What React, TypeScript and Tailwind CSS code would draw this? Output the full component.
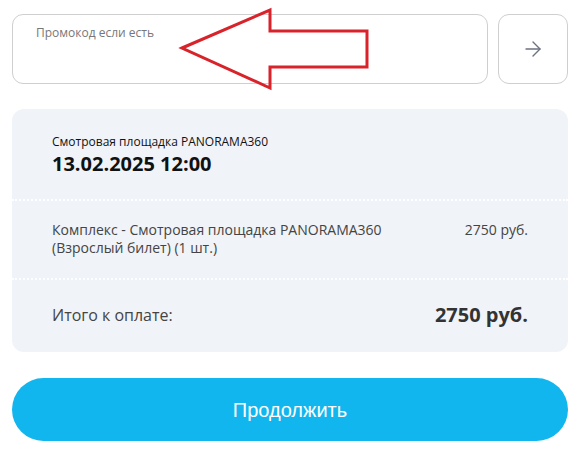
import React from "react";
import { ArrowRight } from "lucide-react";

export default function App() {
  return (
    <div className="relative w-[580px] h-[455px] bg-white" style={{ fontFamily: '"Open Sans", "Noto Sans", sans-serif' }}>
      <div className="flex flex-col px-[12px] pt-[14px]">
        <div className="flex gap-[10px]">
          <div className="flex-1 h-[70px] rounded-[11px] border border-[#cfcfcf] pl-[23px] pt-[10px]">
            <div className="text-[12px] leading-[16px] text-[#777]">Промокод если есть</div>
          </div>
          <div className="w-[70px] h-[70px] rounded-[11px] border border-[#cfcfcf] flex items-center justify-center">
            <ArrowRight size={24} strokeWidth={1.4} className="text-[#6b7280]" />
          </div>
        </div>

        <div className="mt-[25px] rounded-[12px] bg-[#f0f3f7] overflow-hidden">
          <div className="px-[40px] pt-[25px] pb-[21px] border-b-2 border-dotted border-white">
            <div className="text-[12px] leading-[16px] text-[#111]">Смотровая площадка PANORAMA360</div>
            <div className="text-[20px] leading-[28px] font-bold text-[#111]">13.02.2025 12:00</div>
          </div>
          <div className="px-[40px] pt-[20px] pb-[21px] border-b-2 border-dotted border-white flex justify-between">
            <div className="text-[14px] leading-[18px] text-[#444]">
              Комплекс - Смотровая площадка PANORAMA360<br />(Взрослый билет) (1 шт.)
            </div>
            <div className="text-[14px] leading-[18px] text-[#444]">2750 руб.</div>
          </div>
          <div className="px-[40px] pt-[21px] pb-[23px] flex justify-between items-center">
            <div className="text-[16px] leading-[22px] text-[#444]">Итого к оплате:</div>
            <div className="text-[20px] leading-[28px] font-bold text-[#333]">2750 руб.</div>
          </div>
        </div>

        <button className="mt-[26px] h-[63px] rounded-full bg-[#12b6ee] text-white text-[20px]" style={{ fontFamily: '"Liberation Sans", Arial, sans-serif' }}>
          Продолжить
        </button>
      </div>

      <svg className="absolute left-0 top-0 pointer-events-none" width="580" height="455">
        <polygon
          points="182,48 270,10 270,31 367,31 367,67 270,67 270,88"
          fill="none"
          stroke="#d8232b"
          strokeWidth="3"
          strokeLinejoin="miter"
        />
      </svg>
    </div>
  );
}
